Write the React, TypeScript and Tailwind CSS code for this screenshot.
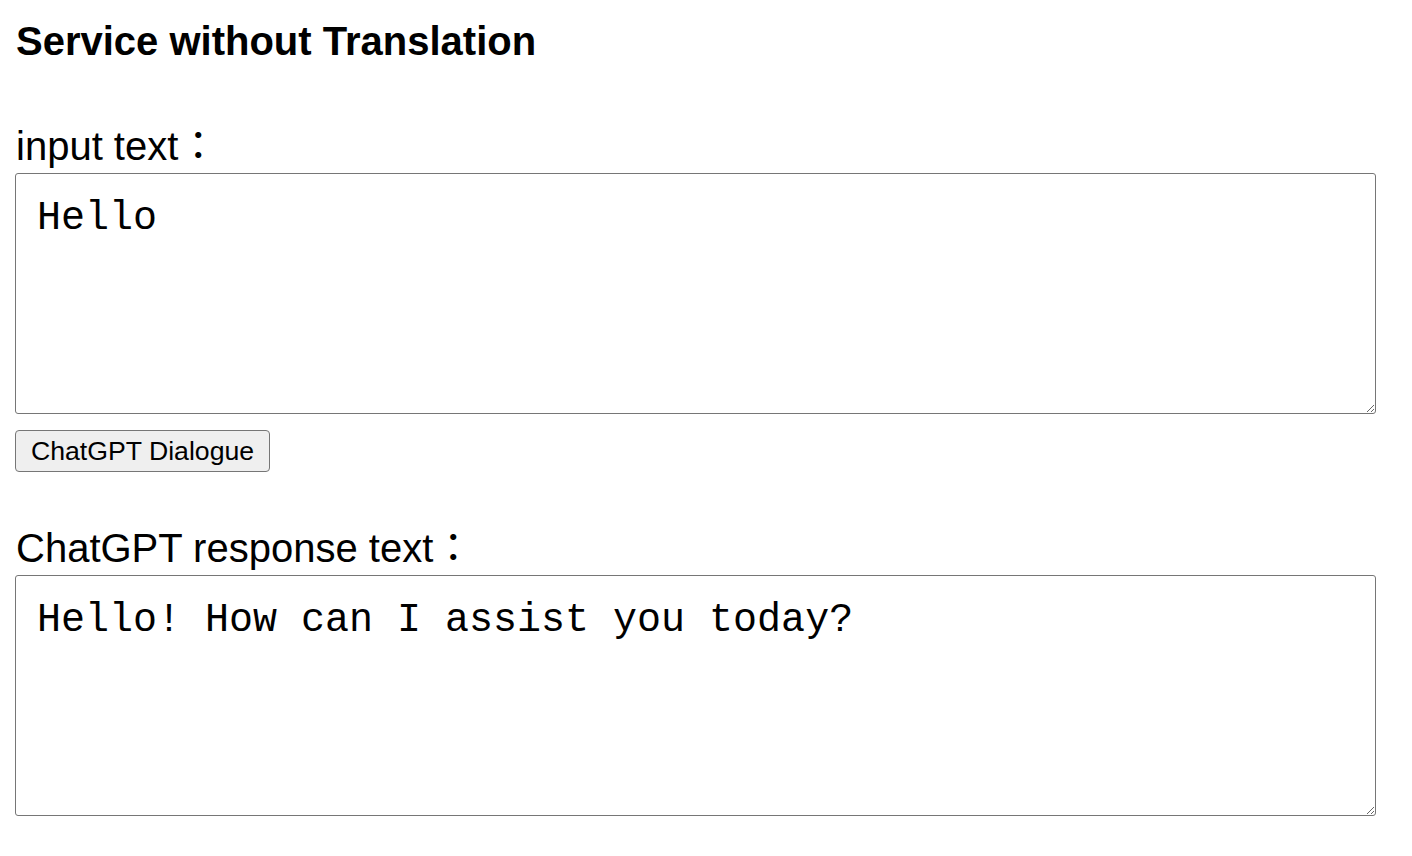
export default function App() {
  return (
    <div className="min-h-screen bg-white pl-[15px] pt-[18px] font-['Liberation_Sans','Noto_Sans_CJK_JP',sans-serif] text-black">
      <h3 className="pl-[1px] text-[40px] font-bold leading-[46px]">Service without Translation</h3>

      <label className="mt-[59px] block pl-[1px] text-[40px] leading-[46px]">input text：</label>
      <textarea
        className="mt-[4px] block h-[241px] w-[1361px] rounded-[3px] border border-[#767676] bg-white px-[21px] py-[22px] font-['Liberation_Mono','Courier_New',monospace] text-[40px] leading-[45px] text-black outline-none"
        defaultValue="Hello"
      />

      <button className="mt-[16px] block h-[42px] w-[255px] rounded-[4px] border border-[#767676] bg-[#efefef] text-[26.67px] leading-[30px] text-black">
        ChatGPT Dialogue
      </button>

      <label className="mt-[53px] block pl-[1px] text-[40px] leading-[46px]">ChatGPT response text：</label>
      <textarea
        className="mt-[4px] block h-[241px] w-[1361px] rounded-[3px] border border-[#767676] bg-white px-[21px] py-[22px] font-['Liberation_Mono','Courier_New',monospace] text-[40px] leading-[45px] text-black outline-none"
        defaultValue="Hello! How can I assist you today?"
      />
    </div>
  );
}
